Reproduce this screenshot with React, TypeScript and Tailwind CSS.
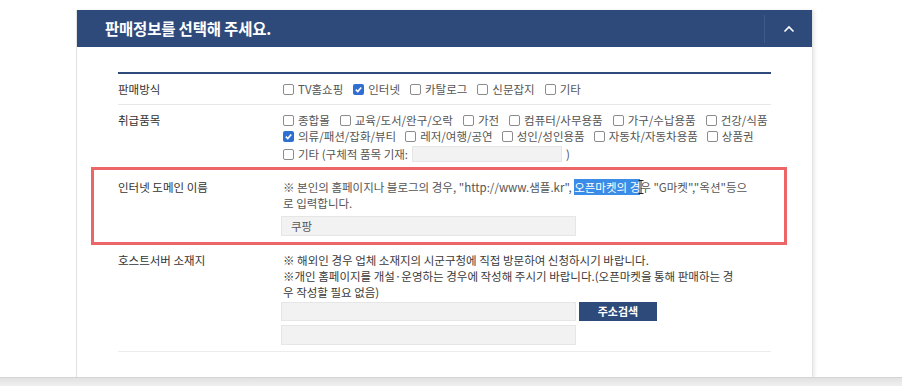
import React from "react";

const font = { fontFamily: "'Noto Sans CJK KR', 'Noto Sans', sans-serif" };

function Box({ checked }: { checked?: boolean }) {
    if (checked) {
        return (
            <span className="inline-flex w-[11px] h-[11px] rounded-[2px] bg-[#2f6fd1] items-center justify-center shrink-0">
                <svg width="9" height="9" viewBox="0 0 10 10">
                    <path d="M2 5.2 L4.2 7.3 L8 2.8" stroke="white" strokeWidth="1.8" fill="none" />
                </svg>
            </span>
        );
    }
    return <span className="inline-block w-[11px] h-[11px] rounded-[2px] border border-[#8c8c8c] bg-white shrink-0" />;
}

function Opt({ label, checked }: { label: string; checked?: boolean }) {
    return (
        <span className="flex items-center gap-[4px] whitespace-nowrap">
            <Box checked={checked} />
            <span>{label}</span>
        </span>
    );
}

export default function App() {
    return (
        <div className="w-[902px] h-[386px] bg-white flex flex-col overflow-hidden text-[#444]" style={font}>
            <div className="h-[377px] pt-[10px] pl-[76px]">
                <div className="w-[737px] h-[367px] bg-white border-x border-[#e2e2e2] shadow-[2px_0_3px_rgba(0,0,0,0.08)]">
                    {/* header */}
                    <div className="h-[37px] bg-[#2e4a7b] flex items-center">
                        <p className="flex-1 pl-[28px] text-[15.5px] font-bold text-white leading-none tracking-[-0.2px]">판매정보를 선택해 주세요.</p>
                        <div className="w-[48px] h-[28px] border-l border-[#3f5b8b] flex items-center justify-center">
                            <svg width="12" height="8" viewBox="0 0 12 8">
                                <path d="M1.5 6.5 L6 2 L10.5 6.5" stroke="white" strokeWidth="1.6" fill="none" />
                            </svg>
                        </div>
                    </div>

                    <div className="px-[41px] pt-[25px]">
                        <div className="border-t-2 border-[#2e4a7b] text-[11.5px] leading-[16px]">
                            {/* 판매방식 */}
                            <div className="flex h-[31px] items-center border-b border-[#e8e8e8]">
                                <p className="w-[163px] text-[#333]">판매방식</p>
                                <div className="flex gap-x-[10px] pl-[2px] text-[#555]">
                                    <Opt label="TV홈쇼핑" />
                                    <Opt label="인터넷" checked />
                                    <Opt label="카탈로그" />
                                    <Opt label="신문잡지" />
                                    <Opt label="기타" />
                                </div>
                            </div>

                            {/* 취급품목 */}
                            <div className="flex pt-[7px] pb-[5px] border-b border-[#e8e8e8]">
                                <p className="w-[163px] text-[#333]">취급품목</p>
                                <div className="flex flex-col pl-[2px] text-[#555]">
                                    <div className="flex h-[16px] items-center gap-x-[10px]">
                                        <Opt label="종합몰" />
                                        <Opt label="교육/도서/완구/오락" />
                                        <Opt label="가전" />
                                        <Opt label="컴퓨터/사무용품" />
                                        <Opt label="가구/수납용품" />
                                        <Opt label="건강/식품" />
                                    </div>
                                    <div className="flex h-[16px] items-center gap-x-[9px]">
                                        <Opt label="의류/패션/잡화/뷰티" checked />
                                        <Opt label="레저/여행/공연" />
                                        <Opt label="성인/성인용품" />
                                        <Opt label="자동차/자동차용품" />
                                        <Opt label="상품권" />
                                    </div>
                                    <div className="flex h-[16px] mt-[2px] items-center gap-[4px]">
                                        <Box />
                                        <span className="whitespace-nowrap">기타 (구체적 품목 기재:</span>
                                        <span className="w-[150px] h-[16px] bg-[#f2f2f2] border border-[#e6e6e6]" />
                                        <span>)</span>
                                    </div>
                                </div>
                            </div>

                            {/* 인터넷 도메인 이름 */}
                            <div className="relative flex pt-[11px] pb-[7px] border-b border-[#e8e8e8]">
                                <p className="w-[163px] text-[#333]">인터넷 도메인 이름</p>
                                <div className="flex flex-col text-[#555]">
                                    <p className="pl-[2px] whitespace-nowrap">
                                        ※ 본인의 홈페이지나 블로그의 경우, "http://www.샘플.kr",{" "}
                                        <span className="bg-[#3a8ce6] text-white">오픈마켓의 경</span>
                                        <span className="relative">
                                            <svg className="absolute -left-[2px] top-[1px]" width="6" height="14" viewBox="0 0 6 14">
                                                <path d="M0.5 0.5 H5.5 M3 0.5 V13.5 M0.5 13.5 H5.5" stroke="#222" strokeWidth="1" fill="none" />
                                            </svg>
                                            우
                                        </span>{" "}
                                        "G마켓","옥션"등으
                                        <br />
                                        로 입력합니다.
                                    </p>
                                    <div className="mt-[5px] w-[295px] h-[20px] bg-[#f2f2f2] border border-[#e6e6e6] flex items-center pl-[9px] text-[#555]">쿠팡</div>
                                </div>
                                <div className="absolute -left-[27px] -right-[16px] -top-[1px] -bottom-[2px] border-[3px] border-[#ec6668] pointer-events-none" />
                            </div>

                            {/* 호스트서버 소재지 */}
                            <div className="flex pt-[8px] pb-[6px] border-b border-[#ececec]">
                                <p className="w-[163px] text-[#333]">호스트서버 소재지</p>
                                <div className="flex flex-col text-[#3a3a3a]">
                                    <p className="pl-[2px] whitespace-nowrap">
                                        ※ 해외인 경우 업체 소재지의 시군구청에 직접 방문하여 신청하시기 바랍니다.
                                        <br />
                                        ※개인 홈페이지를 개설·운영하는 경우에 작성해 주시기 바랍니다.(오픈마켓을 통해 판매하는 경
                                        <br />
                                        우 작성할 필요 없음)
                                    </p>
                                    <div className="mt-[2px] flex gap-[3px]">
                                        <span className="w-[295px] h-[19px] bg-[#f2f2f2] border border-[#e6e6e6]" />
                                        <button className="w-[78px] h-[19px] bg-[#2e4a7b] text-white text-[11px] font-bold leading-none">주소검색</button>
                                    </div>
                                    <span className="mt-[4px] w-[295px] h-[20px] bg-[#f2f2f2] border border-[#e6e6e6]" />
                                </div>
                            </div>
                        </div>
                    </div>
                </div>
            </div>
            <div className="h-[9px] border-t border-[#d4d4d4] bg-gradient-to-b from-[#e2e2e2] to-[#efefef]" />
        </div>
    );
}
